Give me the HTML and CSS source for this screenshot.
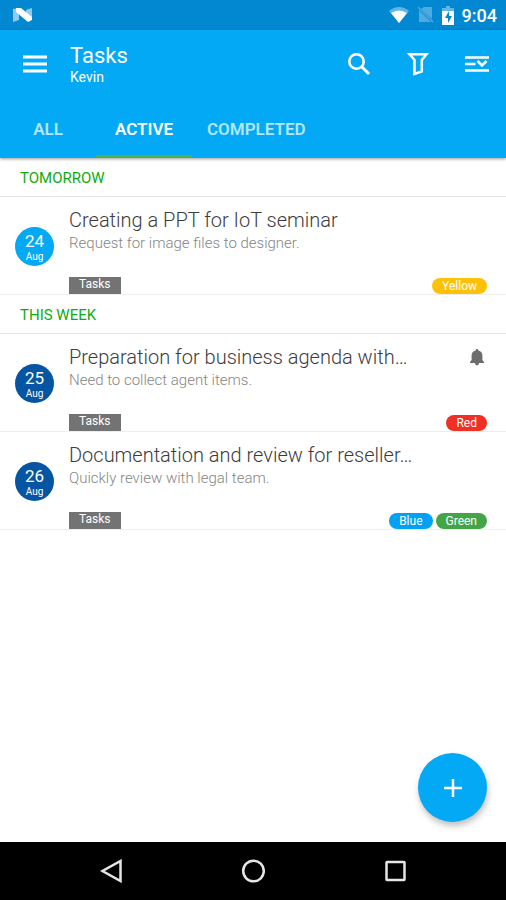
FILE: index.html
```html
<!DOCTYPE html>
<html lang="en">
<head>
<meta charset="utf-8">
<meta name="viewport" content="width=device-width, initial-scale=1">
<title>Tasks</title>
<link rel="stylesheet" href="styles.css">
</head>
<body>
<div class="app">
  <div class="status">
    <svg class="status-logo" width="20" height="16" viewBox="0 0 20 16" aria-hidden="true">
      <path d="M0 2l6-1v12l-6 2z" fill="#8ecbf0"/>
      <path d="M13 3l6-2v11l-6 2z" fill="#8ecbf0"/>
      <path d="M3 1h5l11 9v3l-4 2L3 5z" fill="#fff"/>
    </svg>
    <div class="status-right">
      <svg width="22" height="18" viewBox="0 0 22 18" aria-hidden="true">
        <path d="M1 5Q11-3 21 5L11 17z" fill="#62b6e6"/>
        <path d="M3 7Q11 2 19 7L11 17z" fill="#fff"/>
      </svg>
      <svg width="16" height="18" viewBox="0 0 16 18" aria-hidden="true">
        <path d="M6 1h8v12L3 3zM1 4l12 12H1z" fill="#4fabdf"/>
        <path d="M0 1l15 15" stroke="#4fabdf" stroke-width="1.3"/>
      </svg>
      <svg width="12" height="19" viewBox="0 0 12 19" aria-hidden="true">
        <path d="M4 0h4v2h4v4H0V2h4z" fill="#62b6e6"/>
        <path d="M0 5h12v14H0z" fill="#fff"/>
        <path d="M7 5l-4 7h3v5l4-7H7z" fill="#0288d1"/>
      </svg>
      <span class="clock">9:04</span>
    </div>
  </div>

  <header class="header">
    <div class="toolbar">
      <button class="icon-btn" type="button" aria-label="Menu">
        <svg width="24" height="18" viewBox="0 0 24 18"><path d="M0 2h24M0 9h24M0 16h24" stroke="#fff" stroke-width="3"/></svg>
      </button>
      <div class="heading">
        <h1>Tasks</h1>
        <p>Kevin</p>
      </div>
      <div class="actions">
        <button class="icon-btn" type="button" aria-label="Search">
          <svg width="24" height="24" viewBox="0 0 24 24" fill="none" stroke="#fff"><circle cx="9.500" cy="9.500" r="7.200" stroke-width="2.600"/><path d="M14.500 14.500l7.500 7.500" stroke-width="3"/></svg>
        </button>
        <button class="icon-btn" type="button" aria-label="Filter">
          <svg width="24" height="24" viewBox="0 0 24 24" fill="none" stroke="#fff" stroke-width="2.500"><path d="M3.500 2.200h17L15.800 8v11.300L8.500 22V8z"/></svg>
        </button>
        <button class="icon-btn" type="button" aria-label="Sort">
          <svg width="24" height="18" viewBox="0 0 24 18" fill="none" stroke="#fff" stroke-width="2.600"><path d="M0 2.500h24M0 9h10.500M0 15.500h24"/><path d="M12.500 6l4.500 4.500L21.500 6"/></svg>
        </button>
      </div>
    </div>
    <nav class="tabs">
      <a class="tab" href="#all">ALL</a>
      <a class="tab tab-active" href="#active" aria-current="page">ACTIVE</a>
      <a class="tab" href="#completed">COMPLETED</a>
    </nav>
  </header>

  <main class="content">
    <section>
      <h2 class="group">TOMORROW</h2>
      <article class="task">
        <div class="date date-light"><span class="day">24</span><span class="month">Aug</span></div>
        <div class="body">
          <div class="title-row"><h3>Creating a PPT for IoT seminar</h3></div>
          <p class="note">Request for image files to designer.</p>
          <div class="labels">
            <span class="folder">Tasks</span>
            <div class="tags"><span class="tag yellow">Yellow</span></div>
          </div>
        </div>
      </article>
    </section>
    <section>
      <h2 class="group">THIS WEEK</h2>
      <article class="task">
        <div class="date"><span class="day">25</span><span class="month">Aug</span></div>
        <div class="body">
          <div class="title-row">
            <h3>Preparation for business agenda with…</h3>
            <svg class="bell" width="14" height="17" viewBox="0 0 14 17" role="img" aria-label="Reminder"><path d="M7 0c.9 0 1.400.6 1.400 1.500C11 2.100 12.400 4 12.400 6.500V11l1.600 2v1H0v-1l1.600-2V6.500C1.600 4 3 2.100 5.600 1.500 5.600.6 6.100 0 7 0zM5 14h4c0 1.600-.9 2.400-2 2.400S5 15.600 5 14z" fill="#6d6d6d"/></svg>
          </div>
          <p class="note">Need to collect agent items.</p>
          <div class="labels">
            <span class="folder">Tasks</span>
            <div class="tags"><span class="tag red">Red</span></div>
          </div>
        </div>
      </article>
      <article class="task">
        <div class="date"><span class="day">26</span><span class="month">Aug</span></div>
        <div class="body">
          <div class="title-row"><h3>Documentation and review for reseller…</h3></div>
          <p class="note">Quickly review with legal team.</p>
          <div class="labels">
            <span class="folder">Tasks</span>
            <div class="tags"><span class="tag blue">Blue</span><span class="tag green">Green</span></div>
          </div>
        </div>
      </article>
    </section>
    <button class="fab" type="button" aria-label="Add task">
      <svg width="18" height="18" viewBox="0 0 18 18"><path d="M9 0v18M0 9h18" stroke="#fff" stroke-width="2.500"/></svg>
    </button>
  </main>

  <div class="navbar">
    <button type="button" aria-label="Back"><svg width="24" height="24" viewBox="0 0 24 24" fill="none" stroke="#e6e6e6" stroke-width="2.500"><path d="M21.500 2v20L3.500 12z"/></svg></button>
    <button type="button" aria-label="Home"><svg width="24" height="24" viewBox="0 0 24 24" fill="none" stroke="#e6e6e6" stroke-width="2.500"><circle cx="12.500" cy="12" r="10.300"/></svg></button>
    <button type="button" aria-label="Recent apps"><svg width="24" height="24" viewBox="0 0 24 24" fill="none" stroke="#e6e6e6" stroke-width="2.500"><rect x="3.500" y="3" width="18" height="18" rx=".5"/></svg></button>
  </div>
</div>
</body>
</html>
```

FILE: styles.css
```css
* { box-sizing: border-box; }

body, h1, h2, h3, p { margin: 0; }

body {
  font-family: Roboto, "Liberation Sans", sans-serif;
  background: #fff;
}

button {
  border: 0;
  padding: 0;
  background: none;
  cursor: pointer;
}

svg { display: block; }

.app {
  min-height: 100vh;
  display: flex;
  flex-direction: column;
}

.status {
  height: 30px;
  padding: 0 9px 0 13px;
  display: flex;
  align-items: center;
  justify-content: space-between;
  background: #0288d1;
  color: #fff;
}

.status-right {
  display: flex;
  align-items: center;
  gap: 8px;
}

.clock {
  padding-top: 2px;
  font-size: 18px;
  line-height: 24px;
  font-weight: 500;
}

.header {
  background: #03a9f4;
  color: #fff;
  box-shadow: 0 1px 3px rgba(0, 0, 0, .4);
  z-index: 1;
}

.toolbar {
  height: 72px;
  padding: 0 16px 4px 22px;
  display: flex;
  align-items: center;
}

.icon-btn {
  height: 40px;
  width: 26px;
  display: flex;
  align-items: center;
  justify-content: center;
}

.heading {
  margin-left: 22px;
  padding-top: 2px;
}

.heading h1 {
  font-size: 22px;
  line-height: 24px;
  font-weight: 400;
}

.heading p {
  font-size: 14px;
  line-height: 18px;
}

.actions {
  margin-left: auto;
  display: flex;
  gap: 33px;
}

.tabs {
  height: 56px;
  display: flex;
}

.tab {
  min-width: 96px;
  padding: 0 15px;
  display: flex;
  align-items: center;
  justify-content: center;
  border-bottom: 3px solid transparent;
  color: #b3e5fc;
  font-size: 17px;
  font-weight: 600;
  text-decoration: none;
}

.tab-active {
  color: #fff;
  border-bottom-color: #4caf50;
}

.content {
  flex: 1;
  position: relative;
}

.group {
  padding: 11px 20px 9px;
  border-bottom: 1px solid #e4e4e4;
  color: #0fac0f;
  font-size: 15px;
  line-height: 18px;
  font-weight: 400;
}

.task {
  padding: 10px 19px 0 15px;
  display: flex;
  align-items: flex-start;
  gap: 15px;
  border-bottom: 1px solid #ededed;
}

.date {
  width: 39px;
  height: 39px;
  margin-top: 20px;
  flex: none;
  display: flex;
  flex-direction: column;
  align-items: center;
  justify-content: center;
  border-radius: 50%;
  background: #0655a3;
  color: #fff;
}

.date-light { background: #03a9f4; }

.day {
  font-size: 17px;
  line-height: 20px;
}

.month {
  font-size: 10px;
  line-height: 12px;
}

.body {
  flex: 1;
  min-width: 0;
}

.title-row {
  display: flex;
  align-items: center;
  justify-content: space-between;
}

.title-row h3 {
  color: #3c3c3c;
  font-size: 20px;
  line-height: 26px;
  font-weight: 300;
}

.bell { margin-right: 3px; }

.note {
  color: #858585;
  font-size: 15px;
  line-height: 20px;
  font-weight: 300;
}

.labels {
  margin-top: 24px;
  display: flex;
  align-items: flex-end;
  justify-content: space-between;
}

.folder {
  padding: 0 10px 2px;
  background: #737373;
  color: #fff;
  font-size: 12px;
  line-height: 15px;
}

.tags {
  display: flex;
  gap: 3px;
}

.tag {
  padding: 0 10px;
  border-radius: 8px;
  color: #fff;
  font-size: 12px;
  line-height: 16px;
}

.yellow { background: #ffc107; }
.red { background: #ee3124; }
.blue { background: #03a0f4; }
.green { background: #43a547; }

.fab {
  position: absolute;
  right: 19px;
  bottom: 20px;
  width: 69px;
  height: 69px;
  display: flex;
  align-items: center;
  justify-content: center;
  border-radius: 50%;
  background: #03a9f4;
  box-shadow: 1px 4px 6px rgba(0, 0, 0, .25);
}

.navbar {
  height: 58px;
  padding: 0 8%;
  display: grid;
  grid-template-columns: repeat(3, 1fr);
  justify-items: center;
  align-items: center;
  background: #000;
}
```
